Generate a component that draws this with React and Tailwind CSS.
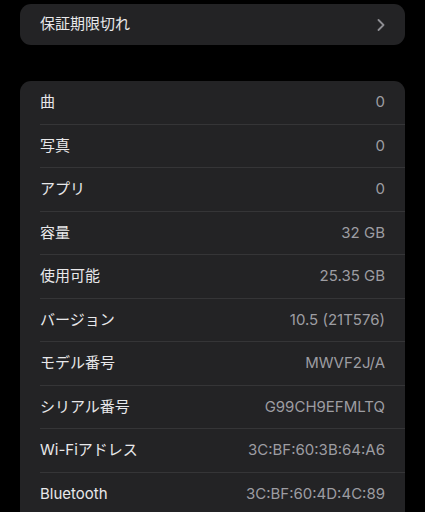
import React from "react";

const rows = [
  ["曲", "0"],
  ["写真", "0"],
  ["アプリ", "0"],
  ["容量", "32 GB"],
  ["使用可能", "25.35 GB"],
  ["バージョン", "10.5 (21T576)"],
  ["モデル番号", "MWVF2J/A"],
  ["シリアル番号", "G99CH9EFMLTQ"],
  ["Wi-Fiアドレス", "3C:BF:60:3B:64:A6"],
  ["Bluetooth", "3C:BF:60:4D:4C:89"],
];

export default function App() {
  return (
    <div
      className="w-[425px] h-[512px] overflow-hidden bg-black text-[15px]"
      style={{ fontFamily: 'Inter, "Noto Sans CJK JP", sans-serif' }}
    >
      <div className="pt-[4px] px-[20px]">
        <div className="h-[41px] rounded-[11px] bg-[#232325] flex items-center justify-between pl-[20px] pr-[20px]">
          <span className="text-[#e8e8ea]">保証期限切れ</span>
          <svg width="8" height="12" viewBox="0 0 8 12" fill="none">
            <path d="M1.5 1 L6.5 6 L1.5 11" stroke="#8e8e93" strokeWidth="1.8" strokeLinecap="round" strokeLinejoin="round" />
          </svg>
        </div>
        <div className="mt-[36px] rounded-t-[11px] bg-[#232325] pl-[20px]">
          {rows.map(([k, v], i) => (
            <div
              key={k}
              className={`h-[43.5px] flex items-center justify-between pr-[20px] ${i < rows.length - 1 ? "border-b border-[#353537]" : ""}`}
            >
              <span className="text-[#e8e8ea]">{k}</span>
              <span className="text-[#9d9da2]">{v}</span>
            </div>
          ))}
        </div>
      </div>
    </div>
  );
}
